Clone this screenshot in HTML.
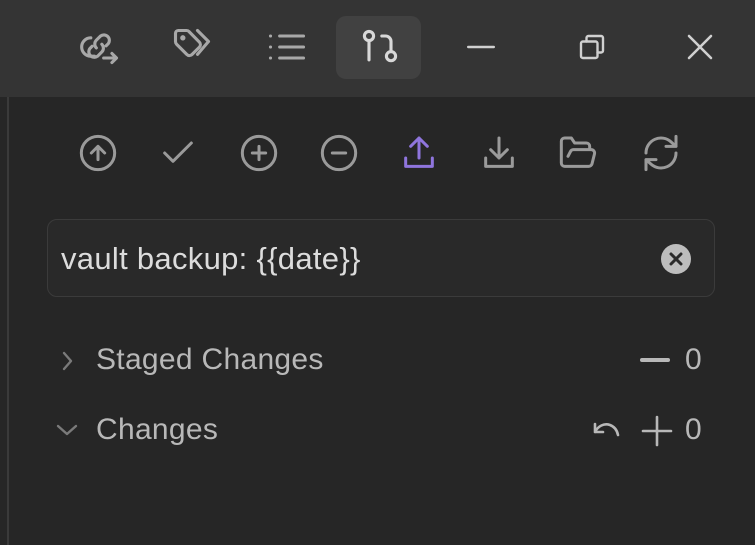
<!DOCTYPE html>
<html><head><style>
body{margin:0;width:755px;height:545px;background:#262626;overflow:hidden;position:relative;font-family:"Liberation Sans",sans-serif}
.hdr{position:absolute;left:0;top:0;width:755px;height:97px;background:#343434}
.vl{position:absolute;left:7px;top:97px;width:2px;height:448px;background:#3a3a3a}
.ic{position:absolute;fill:none;stroke-linecap:round;stroke-linejoin:round}
.act{position:absolute;left:336px;top:16px;width:85px;height:63px;background:#414141;border-radius:10px}
.inp{position:absolute;left:47px;top:219px;width:666px;height:76px;border:1px solid #3b3b3b;border-radius:10px;background:#292929}
.t{position:absolute;white-space:nowrap}
</style></head><body>
<div class="hdr"></div>
<div class="vl"></div>
<div class="act"></div>
<svg class="ic" style="left:78px;top:25px" width="44" height="44" viewBox="0 0 24 24" stroke="#a8a8a8" stroke-width="1.7"><path d="M9 17H7A5 5 0 0 1 7 7"/><path d="M10 12.5a3 3 0 0 1 0-4.2l2.3-2.3a3 3 0 0 1 4.2 4.2l-1.2 1.2"/><path d="M13 10.5a3 3 0 0 1 0 4.2l-2.3 2.3a3 3 0 0 1-4.2-4.2l1.2-1.2"/><path d="M14 18h7M18.5 15.5L21 18l-2.5 2.5"/></svg>
<svg class="ic" style="left:170px;top:25px" width="44" height="44" viewBox="0 0 24 24" stroke="#a8a8a8" stroke-width="1.7"><path d="M3 4.5v4.6c0 .5.2 1 .6 1.4l5.6 5.6a2 2 0 0 0 2.8 0l4-4a2 2 0 0 0 0-2.8L10.4 3.6A2 2 0 0 0 9 3H4.5A1.5 1.5 0 0 0 3 4.5z"/><path d="M15 3l6 6-6 7"/><circle cx="7" cy="7" r=".6" fill="#a8a8a8"/></svg>
<svg class="ic" style="left:265px;top:25px" width="44" height="44" viewBox="0 0 24 24" stroke="#a8a8a8" stroke-width="1.7"><path d="M8 6h13M8 12h13M8 18h13M3 6h.01M3 12h.01M3 18h.01"/></svg>
<svg class="ic" style="left:358px;top:25px" width="44" height="44" viewBox="0 0 24 24" stroke="#d8d8d8" stroke-width="1.7"><circle cx="6" cy="6" r="2.5"/><path d="M6 8.5V19"/><circle cx="18" cy="17" r="2.5"/><path d="M18 14.5V9a3 3 0 0 0-3-3h-2"/></svg>
<svg class="ic" style="left:459px;top:25px" width="44" height="44" viewBox="0 0 24 24" stroke="#d0d0d0" stroke-width="1.3"><path d="M5 12h14"/></svg>
<svg class="ic" style="left:570px;top:25px" width="44" height="44" viewBox="0 0 24 24" stroke="#d0d0d0" stroke-width="1.3"><rect x="6" y="9" width="9" height="9" rx="1"/><path d="M9 9V7a1 1 0 0 1 1-1h7a1 1 0 0 1 1 1v7a1 1 0 0 1-1 1h-2"/></svg>
<svg class="ic" style="left:678px;top:25px" width="44" height="44" viewBox="0 0 24 24" stroke="#d0d0d0" stroke-width="1.4"><path d="M6 6l12 12M18 6L6 18"/></svg>
<svg class="ic" style="left:78px;top:133px" width="40" height="40" viewBox="0 0 24 24" stroke="#9a9a9a" stroke-width="1.8"><circle cx="12" cy="12" r="10"/><path d="M12 16V8M8 12l4-4 4 4"/></svg>
<svg class="ic" style="left:158px;top:133px" width="40" height="40" viewBox="0 0 24 24" stroke="#9a9a9a" stroke-width="1.8"><path d="M20 6L9 17l-5-5"/></svg>
<svg class="ic" style="left:239px;top:133px" width="40" height="40" viewBox="0 0 24 24" stroke="#9a9a9a" stroke-width="1.8"><circle cx="12" cy="12" r="10"/><path d="M8 12h8M12 8v8"/></svg>
<svg class="ic" style="left:319px;top:133px" width="40" height="40" viewBox="0 0 24 24" stroke="#9a9a9a" stroke-width="1.8"><circle cx="12" cy="12" r="10"/><path d="M8 12h8"/></svg>
<svg class="ic" style="left:399px;top:133px" width="40" height="40" viewBox="0 0 24 24" stroke="#8f75dd" stroke-width="1.8"><path d="M4 15v5h16v-5M12 15V3M7 8l5-5 5 5"/></svg>
<svg class="ic" style="left:479px;top:133px" width="40" height="40" viewBox="0 0 24 24" stroke="#9a9a9a" stroke-width="1.8"><path d="M4 15v5h16v-5M12 3v12M7 10l5 5 5-5"/></svg>
<svg class="ic" style="left:558px;top:133px" width="40" height="40" viewBox="0 0 24 24" stroke="#9a9a9a" stroke-width="1.8"><path d="M6 14l1.5-2.9A2 2 0 0 1 9.2 10H20a2 2 0 0 1 1.9 2.5l-1.5 6A2 2 0 0 1 18.5 20H4a2 2 0 0 1-2-2V5a2 2 0 0 1 2-2h4l2 3h7a2 2 0 0 1 2 2v2"/></svg>
<svg class="ic" style="left:641px;top:133px" width="40" height="40" viewBox="0 0 24 24" stroke="#9a9a9a" stroke-width="1.8"><path d="M21 2v6h-6M3 12a9 9 0 0 1 15-6.7L21 8M3 22v-6h6M21 12a9 9 0 0 1-15 6.7L3 16"/></svg>
<div class="inp"></div>
<div class="t" style="left:61px;top:241px;font-size:31px;color:#dcdcdc;letter-spacing:0.3px">vault backup: {{date}}</div>
<svg class="ic" style="left:660px;top:243px" width="32" height="32" viewBox="0 0 32 32"><circle cx="16" cy="16" r="15" fill="#bdbdbd"/><path d="M11 11l10 10M21 11L11 21" stroke="#2a2a2a" stroke-width="3"/></svg>
<svg class="ic" style="left:57px;top:349px" width="22" height="24" viewBox="0 0 22 24" stroke="#7a7a7a" stroke-width="2.4"><path d="M7 4l7 8-7 8"/></svg>
<div class="t" style="left:96px;top:343px;font-size:30px;color:#b8b8b8;letter-spacing:0.3px">Staged Changes</div>
<div class="t" style="left:640px;top:358px;width:30px;height:4px;background:#b8b8b8;border-radius:2px"></div>
<div class="t" style="left:685px;top:343px;font-size:30px;color:#b8b8b8">0</div>
<svg class="ic" style="left:54px;top:420px" width="26" height="22" viewBox="0 0 26 22" stroke="#7a7a7a" stroke-width="2.4"><path d="M4 6l9 8 9-8"/></svg>
<div class="t" style="left:96px;top:413px;font-size:30px;color:#b8b8b8;letter-spacing:0.3px">Changes</div>
<svg class="ic" style="left:592px;top:414px" width="40" height="32" viewBox="0 0 40 32" stroke="#b8b8b8" stroke-width="2.6"><path d="M3 10v8h8M3 18c3-6 9-9 15-7 4 1.5 7 5 8 10"/></svg>
<svg class="ic" style="left:640px;top:414px" width="34" height="34" viewBox="0 0 34 34" stroke="#b8b8b8" stroke-width="2.6"><path d="M17 3v28M3 17h28"/></svg>
<div class="t" style="left:685px;top:413px;font-size:30px;color:#b8b8b8">0</div>
</body></html>
